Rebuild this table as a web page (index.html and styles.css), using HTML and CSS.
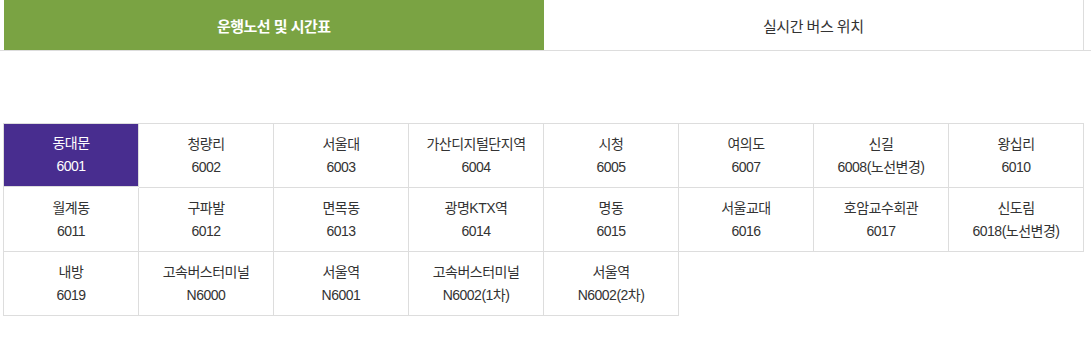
FILE: index.html
```html
<!DOCTYPE html>
<html lang="ko">
<head>
<meta charset="utf-8">
<title>운행노선 및 시간표</title>
<link rel="stylesheet" href="styles.css">
</head>
<body>
<div class="tabbar">
  <div class="tabs">
    <div class="tab active">운행노선 및 시간표</div>
    <div class="tab">실시간 버스 위치</div>
  </div>
</div>
<div class="routes">
  <div class="cell active"><span>동대문</span><span>6001</span></div>
  <div class="cell"><span>청량리</span><span>6002</span></div>
  <div class="cell"><span>서울대</span><span>6003</span></div>
  <div class="cell"><span>가산디지털단지역</span><span>6004</span></div>
  <div class="cell"><span>시청</span><span>6005</span></div>
  <div class="cell"><span>여의도</span><span>6007</span></div>
  <div class="cell"><span>신길</span><span>6008(노선변경)</span></div>
  <div class="cell"><span>왕십리</span><span>6010</span></div>
  <div class="cell"><span>월계동</span><span>6011</span></div>
  <div class="cell"><span>구파발</span><span>6012</span></div>
  <div class="cell"><span>면목동</span><span>6013</span></div>
  <div class="cell"><span>광명KTX역</span><span>6014</span></div>
  <div class="cell"><span>명동</span><span>6015</span></div>
  <div class="cell"><span>서울교대</span><span>6016</span></div>
  <div class="cell"><span>호암교수회관</span><span>6017</span></div>
  <div class="cell"><span>신도림</span><span>6018(노선변경)</span></div>
  <div class="cell"><span>내방</span><span>6019</span></div>
  <div class="cell"><span>고속버스터미널</span><span>N6000</span></div>
  <div class="cell"><span>서울역</span><span>N6001</span></div>
  <div class="cell"><span>고속버스터미널</span><span>N6002(1차)</span></div>
  <div class="cell"><span>서울역</span><span>N6002(2차)</span></div>
</div>
</body>
</html>
```
FILE: styles.css
```css
html, body {
  margin: 0;
  padding: 0;
  background: #fff;
}
body {
  font-family: "Liberation Sans", "Noto Sans CJK KR", sans-serif;
  color: #333;
}
.tabbar {
  border-bottom: 1px solid #ddd;
}
.tabs {
  display: flex;
  margin-left: 4px;
  width: 1080px;
}
.tab {
  flex: 1;
  height: 50px;
  display: flex;
  align-items: center;
  justify-content: center;
  font-size: 15px;
  letter-spacing: -0.5px;
  color: #333;
  border-right: 1px solid #ddd;
}
.tab.active {
  background: #7aa343;
  color: #fff;
  font-weight: bold;
  border-right: none;
}
.routes {
  margin: 72px 0 0 3px;
  width: 1081px;
  box-sizing: border-box;
  display: grid;
  grid-template-columns: repeat(8, 135px);
  border-top: 1px solid #ddd;
  border-left: 1px solid #ddd;
}
.cell {
  height: 63px;
  border-right: 1px solid #ddd;
  border-bottom: 1px solid #ddd;
  display: flex;
  flex-direction: column;
  align-items: center;
  justify-content: center;
  font-size: 14px;
  line-height: 23px;
  letter-spacing: -0.5px;
}
.cell:first-child {
  height: 62px;
}
.cell.active {
  background: #482d8f;
  color: #fff;
}
```
